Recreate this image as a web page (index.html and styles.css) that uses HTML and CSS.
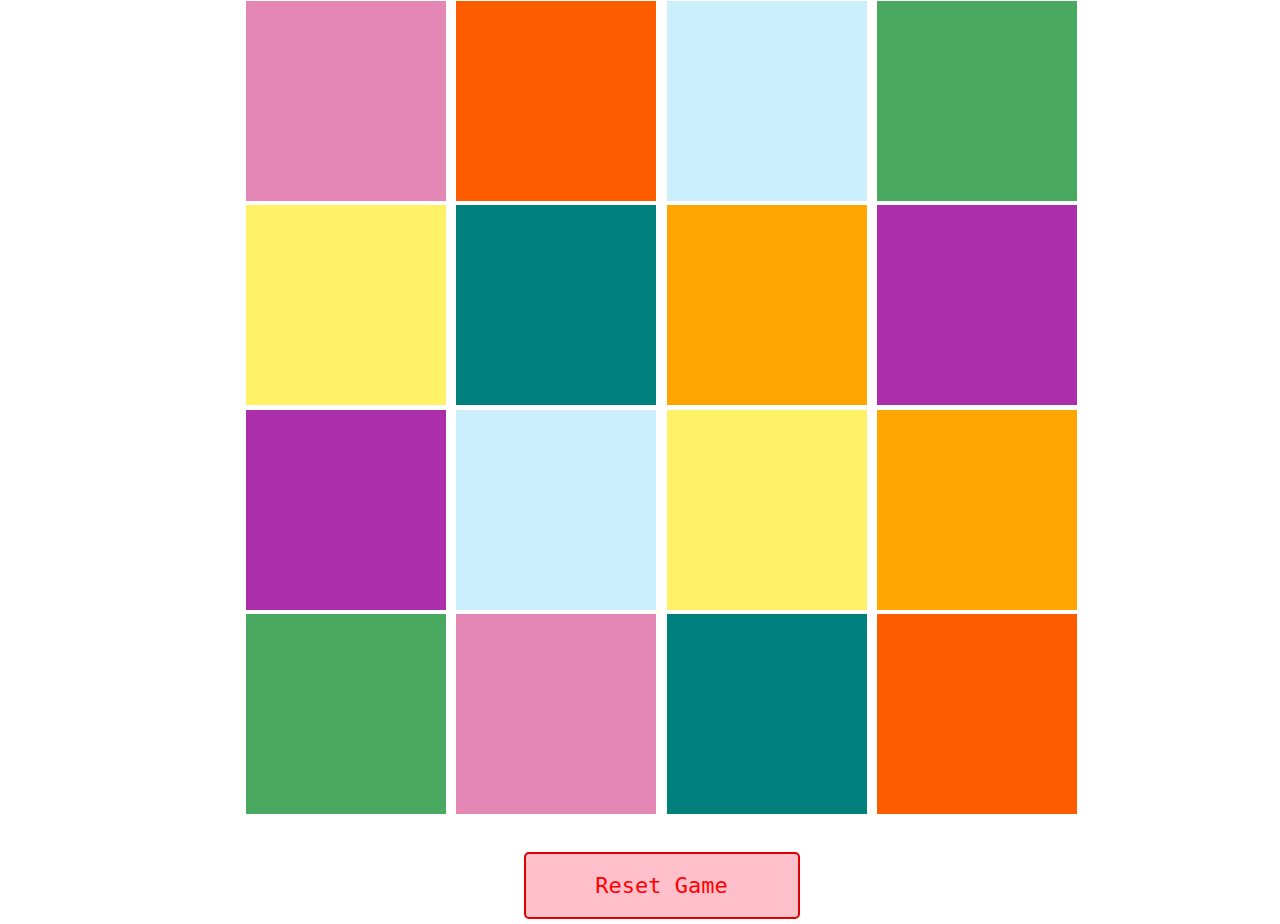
FILE: index.html
```html
<!DOCTYPE html>
<html>
<head>
<meta charset="utf-8">
<link rel="stylesheet" href="styles.css">
</head>
<body>
<div class="page">
  <div class="board">
    <div class="tile pink"></div>
    <div class="tile orange"></div>
    <div class="tile sky"></div>
    <div class="tile green"></div>
    <div class="tile yellow"></div>
    <div class="tile teal"></div>
    <div class="tile amber"></div>
    <div class="tile purple"></div>
    <div class="tile purple"></div>
    <div class="tile sky"></div>
    <div class="tile yellow"></div>
    <div class="tile amber"></div>
    <div class="tile green"></div>
    <div class="tile pink"></div>
    <div class="tile teal"></div>
    <div class="tile orange"></div>
  </div>
  <button class="reset">Reset Game</button>
</div>
</body>
</html>
```
FILE: styles.css
```css
html, body {
  margin: 0;
  padding: 0;
  background: #ffffff;
}
.page {
  display: flex;
  flex-direction: column;
  align-items: center;
  padding-left: 43px;
  padding-top: 0.5px;
}
.board {
  display: grid;
  grid-template-columns: repeat(4, 200px);
  grid-auto-rows: 200px;
  column-gap: 10.25px;
  row-gap: 4.5px;
}
.tile { width: 200px; height: 200px; }
.pink { background: #e487b5; }
.orange { background: #ff5c00; }
.sky { background: #cceffd; }
.green { background: #4aa960; }
.yellow { background: #fff266; }
.teal { background: #00807c; }
.amber { background: #ffa500; }
.purple { background: #ab2fab; }
.reset {
  margin-top: 38px;
  width: 276px;
  height: 67px;
  box-sizing: border-box;
  border: 2px solid #e00000;
  border-radius: 5px;
  background: #ffc0cb;
  color: #ff0000;
  font-family: "DejaVu Sans Mono", monospace;
  font-size: 22px;
  padding: 0;
  cursor: pointer;
}
```
